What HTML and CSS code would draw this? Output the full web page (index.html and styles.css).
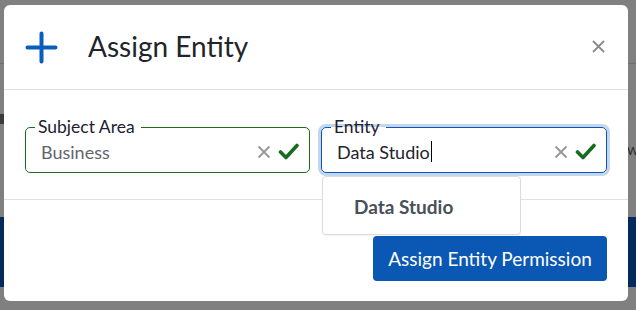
FILE: index.html
```html
<!DOCTYPE html>
<html>
<head>
<meta charset="utf-8">
<link rel="stylesheet" href="styles.css">
</head>
<body>
<div class="page">
  <div class="page-top"></div>
  <div class="page-mark"></div>
  <div class="page-w">w</div>
  <div class="page-band"></div>
</div>
<div class="modal">
  <div class="modal-header">
    <svg class="plus" width="33" height="33" viewBox="0 0 33 33"><path d="M16.5 2.5 V30.5 M2.5 16.5 H30.5" stroke="#0b5cbf" stroke-width="4" stroke-linecap="round" fill="none"/></svg>
    <h1 class="title">Assign Entity</h1>
    <svg class="close" width="13" height="13" viewBox="0 0 13 13"><path d="M1 1 L12 12 M12 1 L1 12" stroke="#8a8a8a" stroke-width="1.8" fill="none"/></svg>
  </div>
  <div class="modal-body">
    <fieldset class="field valid">
      <legend>Subject Area</legend>
      <div class="field-row">
        <span class="value muted">Business</span>
        <svg class="x" width="14" height="14" viewBox="0 0 14 14"><path d="M1.5 1.5 L12.5 12.5 M12.5 1.5 L1.5 12.5" stroke="#999" stroke-width="2" fill="none"/></svg>
        <svg class="check" width="21" height="17" viewBox="0 0 21 17"><path d="M2.5 9 L8 14.5 L19 2.5" stroke="#156b1e" stroke-width="3.6" fill="none" stroke-linecap="round" stroke-linejoin="round"/></svg>
      </div>
    </fieldset>
    <div class="field-wrap">
      <fieldset class="field focused">
        <legend>Entity</legend>
        <div class="field-row">
          <span class="value">Data Studio<span class="caret"></span></span>
          <svg class="x" width="14" height="14" viewBox="0 0 14 14"><path d="M1.5 1.5 L12.5 12.5 M12.5 1.5 L1.5 12.5" stroke="#999" stroke-width="2" fill="none"/></svg>
          <svg class="check" width="21" height="17" viewBox="0 0 21 17"><path d="M2.5 9 L8 14.5 L19 2.5" stroke="#156b1e" stroke-width="3.6" fill="none" stroke-linecap="round" stroke-linejoin="round"/></svg>
        </div>
      </fieldset>
      <div class="dropdown">
        <div class="option">Data Studio</div>
      </div>
    </div>
  </div>
  <div class="modal-footer">
    <button class="btn">Assign Entity Permission</button>
  </div>
</div>
</body>
</html>
```
FILE: styles.css
```css
* { box-sizing: border-box; }
html, body { margin: 0; padding: 0; }
body {
  width: 636px;
  height: 310px;
  overflow: hidden;
  position: relative;
  background: #808080;
  font-family: Lato, "Open Sans", sans-serif;
  color: #212529;
}
.page { height: 310px; }
.page-top { height: 64px; border-bottom: 1px solid #6f6f6f; }
.page-mark { margin-top: 50px; width: 4px; height: 10px; background: #3b3b3b; }
.page-w {
  margin-top: 15px;
  padding-left: 627px;
  font-size: 15px;
  line-height: 20px;
  color: #2e2e2e;
  white-space: nowrap;
}
.page-band { margin-top: 58px; height: 70px; background: #042a5c; }

.modal {
  position: absolute;
  left: 4px;
  top: 5px;
  width: 624px;
  height: 296px;
  background: #fff;
  border-radius: 6px;
  display: flex;
  flex-direction: column;
}
.modal-header {
  height: 85px;
  display: flex;
  align-items: center;
  padding: 0 23px 0 21px;
  border-bottom: 1px solid #dee2e6;
}
.plus { display: block; margin-top: 1px; }
.title {
  margin: 0 0 0 30px;
  font-weight: 400;
  font-size: 28px;
  line-height: 1.2;
  color: #212529;
  flex: 1;
}
.close { display: block; margin-top: -2px; }

.modal-body {
  height: 110px;
  display: flex;
  gap: 11px;
  padding: 27px 21px 0 21px;
  border-bottom: 1px solid #dee2e6;
}
.field-wrap { position: relative; width: 286px; }
.field {
  margin: 0;
  width: 285px;
  height: 56px;
  border: 1px solid #18701f;
  border-radius: 5px;
  padding: 0 10px 0 13px;
}
.field-wrap .field { width: 286px; }
.field.focused {
  border-color: #0b57b5;
  box-shadow: 0 0 0 3px #c3d6ee;
}
.field legend {
  font-size: 17.5px;
  line-height: 20px;
  padding: 0 6px 0 3px;
  margin-left: -4px;
  color: #1c2030;
}
.field-row {
  display: flex;
  align-items: center;
  height: 33px;
  padding-bottom: 4px;
}
.value {
  flex: 1;
  font-size: 18px;
  line-height: 22px;
  color: #212529;
  padding-left: 2px;
  display: flex;
  align-items: center;
}
.value.muted { color: #5f666e; }
.caret {
  display: inline-block;
  width: 1px;
  height: 21px;
  background: #000;
  margin-left: 1px;
}
.x { display: block; margin-right: 7px; }
.check { display: block; }

.dropdown {
  position: absolute;
  left: 1px;
  top: 59px;
  width: 199px;
  height: 59px;
  background: #fff;
  border: 1px solid #dcdcdc;
  border-radius: 4px;
  box-shadow: 0 1px 2px rgba(0,0,0,0.06);
  display: flex;
  align-items: center;
  z-index: 2;
}
.option {
  padding-left: 31px;
  font-size: 19px;
  font-weight: 700;
  color: #4a5058;
  margin-top: 1px;
}

.modal-footer {
  flex: 1;
  display: flex;
  justify-content: flex-end;
  align-items: flex-start;
  padding: 36px 21px 0 0;
}
.btn {
  width: 234px;
  height: 45px;
  border: none;
  border-radius: 4px;
  background: #0a57b4;
  color: #fff;
  font-family: Lato, "Open Sans", sans-serif;
  font-size: 19px;
  font-weight: 400;
  padding: 0;
}
```
